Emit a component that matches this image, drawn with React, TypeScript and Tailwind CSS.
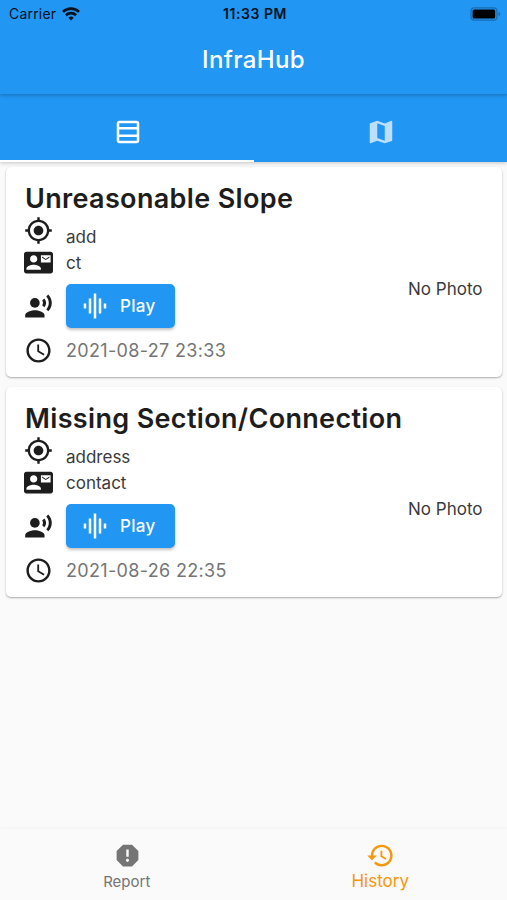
import type { ReactNode } from 'react';
import {
  MdAccessTime,
  MdContactMail,
  MdGraphicEq,
  MdHistory,
  MdMap,
  MdMyLocation,
  MdOutlineTableRows,
  MdRecordVoiceOver,
  MdReport,
} from 'react-icons/md';

interface Report {
  id: number;
  title: string;
  address: string;
  contact: string;
  createdAt: string;
}

const REPORTS: Report[] = [
  { id: 1, title: 'Unreasonable Slope', address: 'add', contact: 'ct', createdAt: '2021-08-27 23:33' },
  { id: 2, title: 'Missing Section/Connection', address: 'address', contact: 'contact', createdAt: '2021-08-26 22:35' },
];

function WifiIcon() {
  return (
    <svg width="18" height="14" viewBox="0 0 18 14" fill="none" stroke="#06121d" strokeWidth="2.6">
      <path d="M1 4.9a11.4 11.4 0 0 1 16 0" />
      <path d="M3.9 8.2a7.3 7.3 0 0 1 10.2 0" />
      <path d="M9 13.6l-2.7-2.9a3.9 3.9 0 0 1 5.4 0z" fill="#06121d" stroke="none" />
    </svg>
  );
}

function BatteryIcon() {
  return (
    <svg width="31" height="14" viewBox="0 0 31 14">
      <rect x="1" y="0.8" width="26" height="12.4" rx="3.4" fill="none" stroke="#1a6bae" strokeWidth="1.2" />
      <rect x="2.6" y="2.5" width="22.6" height="9" rx="1.6" fill="#000" />
      <path d="M28.5 5v4c1.1-.3 1.7-1.1 1.7-2s-.6-1.7-1.7-2z" fill="#1a6bae" />
    </svg>
  );
}

function StatusBar() {
  return (
    <div className="grid h-[27px] grid-cols-3 items-center pl-[9px] pr-[6px] text-[#06121d]">
      <div className="flex items-center gap-[6px]">
        <span className="text-[14px] leading-none tracking-[0.2px]">Carrier</span>
        <WifiIcon />
      </div>
      <span className="text-center text-[14px] font-semibold leading-none tracking-[0.55px]">11:33 PM</span>
      <div className="flex justify-end">
        <BatteryIcon />
      </div>
    </div>
  );
}

function Row({ icon, className, children }: { icon: ReactNode; className: string; children: ReactNode }) {
  return (
    <div className={`-ml-px flex ${className}`}>
      <div className="w-[42px] shrink-0 text-[29px] text-[#1d1d1d]">{icon}</div>
      {children}
    </div>
  );
}

function ReportCard({ report }: { report: Report }) {
  return (
    <div className="flex h-[210px] items-center justify-between rounded-[5px] bg-white pl-[19px] pr-[19.5px] shadow-[0_1px_2px_rgba(0,0,0,0.32)]">
      <div className="h-full pt-[14px] text-[17px] text-[#3a3a3a]">
        <h2 className="h-[35px] whitespace-nowrap text-[27px] font-semibold leading-[35px] tracking-[0.34px] text-[#1d1d1d]">{report.title}</h2>
        <Row icon={<MdMyLocation />} className="h-[32px] items-start">
          <span className="pt-[9px] leading-[24px]">{report.address}</span>
        </Row>
        <Row icon={<MdContactMail />} className="h-[29px] items-center">
          <span className="pt-[2px]">{report.contact}</span>
        </Row>
        <Row icon={<MdRecordVoiceOver />} className="mt-[7px] h-[44px] items-center">
          <button className="flex h-[44px] w-[109px] items-center gap-[10px] rounded-[5px] bg-[#2196f3] pl-[14px] font-medium tracking-[0.3px] text-white shadow-[0_2px_3px_rgba(0,0,0,0.24)]">
            <MdGraphicEq className="text-[30px]" />
            <span className="pt-[2px]">Play</span>
          </button>
        </Row>
        <Row icon={<MdAccessTime />} className="mt-[7px] h-[30px] items-center">
          <span className="text-[18px] tracking-[0.33px] text-[#757575]">{report.createdAt}</span>
        </Row>
      </div>
      <span className="pt-[36px] text-[17px] text-[#3a3a3a]">No Photo</span>
    </div>
  );
}

export default function App() {
  return (
    <div className="flex h-[900px] w-[507px] flex-col overflow-hidden bg-[#fafafa] font-['Inter',sans-serif]">
      {/* App bar */}
      <header className="relative z-20 h-[94px] shrink-0 bg-[#2196f3] shadow-[0_1px_4px_rgba(0,0,0,0.27)]">
        <StatusBar />
        <h1 className="text-center text-[24px] font-medium leading-[66px] tracking-[0.35px] text-white">InfraHub</h1>
      </header>

      {/* Tabs */}
      <nav className="relative z-10 flex h-[68px] shrink-0 bg-[#2196f3] text-[30px] text-white shadow-[0_1px_4px_rgba(0,0,0,0.22)]">
        <button className="flex flex-1 items-center justify-center border-b-2 border-white pl-px pt-[10px]">
          <MdOutlineTableRows />
        </button>
        <button className="flex flex-1 items-center justify-center border-b-2 border-transparent pt-[10px]">
          <MdMap className="opacity-70" />
        </button>
      </nav>

      {/* Report list */}
      <main className="flex flex-1 flex-col gap-[10px] pl-[6px] pr-[5px] pt-[5px]">
        {REPORTS.map(report => (
          <ReportCard key={report.id} report={report} />
        ))}
      </main>

      {/* Bottom navigation */}
      <footer className="flex h-[71px] shrink-0 bg-[#fafafa] shadow-[0_-1px_3px_rgba(0,0,0,0.03)]">
        <button className="flex flex-1 flex-col items-center pt-[12px] text-[#757575]">
          <MdReport className="ml-px text-[29px]" />
          <span className="text-[15px] leading-[24px]">Report</span>
        </button>
        <button className="flex flex-1 flex-col items-center pt-[12px] text-[#f8960c]">
          <MdHistory className="text-[29px]" />
          <span className="text-[17px] leading-[22px]">History</span>
        </button>
      </footer>
    </div>
  );
}
